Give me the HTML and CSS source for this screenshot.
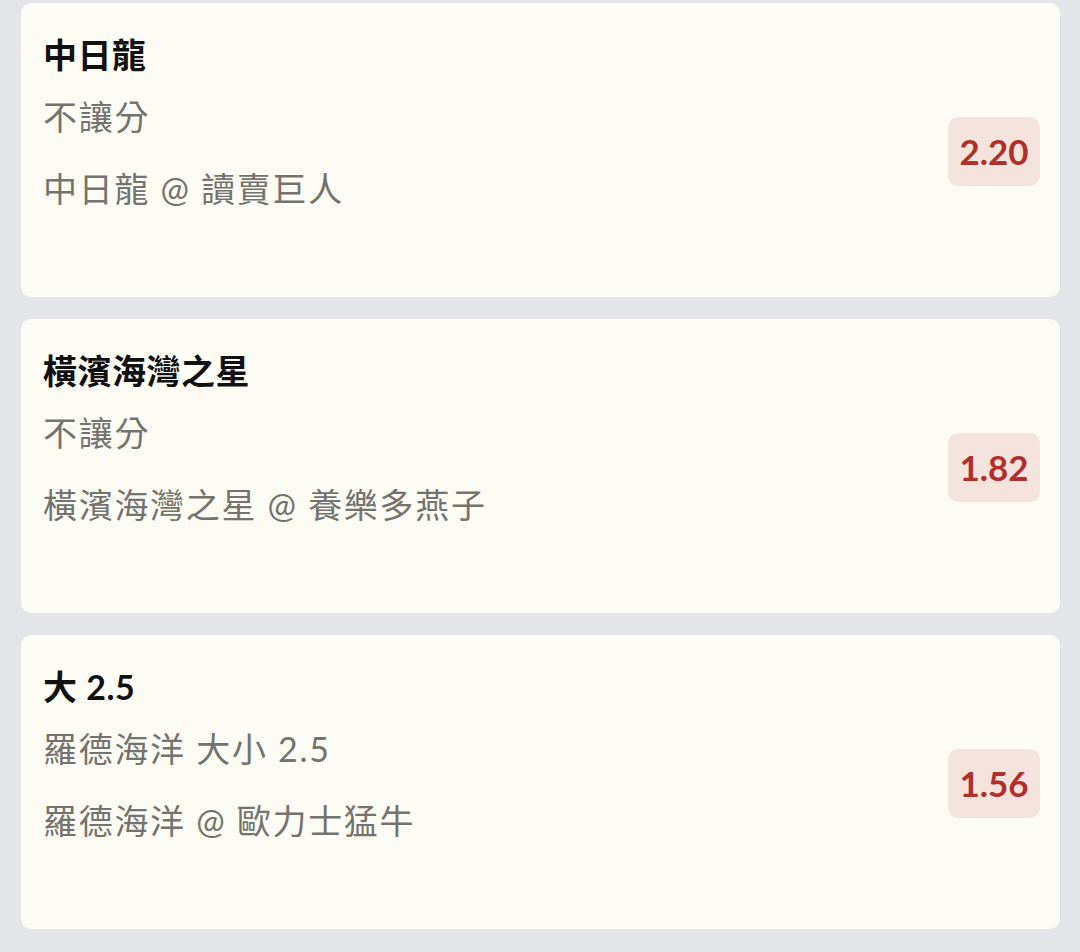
FILE: index.html
```html
<!DOCTYPE html>
<html lang="zh-Hant">
<head>
    <meta charset="UTF-8">
    <meta name="viewport" content="width=device-width, initial-scale=1.0">
    <title>投注選項</title>
    <link rel="stylesheet" href="styles.css">
</head>
<body>
    <div class="bet-list">
        <div class="bet-card">
            <div class="bet-info">
                <div class="bet-pick">中日龍</div>
                <div class="bet-market">不讓分</div>
                <div class="bet-match">中日龍 @ 讀賣巨人</div>
            </div>
            <div class="bet-odds">2.20</div>
        </div>

        <div class="bet-card">
            <div class="bet-info">
                <div class="bet-pick">橫濱海灣之星</div>
                <div class="bet-market">不讓分</div>
                <div class="bet-match">橫濱海灣之星 @ 養樂多燕子</div>
            </div>
            <div class="bet-odds">1.82</div>
        </div>

        <div class="bet-card">
            <div class="bet-info">
                <div class="bet-pick">大 2.5</div>
                <div class="bet-market">羅德海洋 大小 2.5</div>
                <div class="bet-match">羅德海洋 @ 歐力士猛牛</div>
            </div>
            <div class="bet-odds">1.56</div>
        </div>
    </div>
</body>
</html>
```

FILE: styles.css
```css
body {
    margin: 0;
    background-color: #e4e5e8;
    font-family: 'Lato', 'Noto Sans CJK TC', sans-serif;
}
.bet-list {
    display: flex;
    flex-direction: column;
    gap: 22px;
    padding: 3px 20px 0 21px;
}
.bet-card {
    display: flex;
    align-items: flex-start;
    height: 294px;
    box-sizing: border-box;
    padding: 32px 20px 0 22px;
    background-color: #fdfcf4;
    border-radius: 10px;
}
.bet-info {
    flex: 1;
}
.bet-pick {
    font-size: 34px;
    line-height: 40px;
    font-weight: 700;
    letter-spacing: 0.5px;
    color: #111;
    margin-bottom: 22px;
}
.bet-market,
.bet-match {
    font-size: 34px;
    line-height: 40px;
    letter-spacing: 1.7px;
    color: #74736e;
}
.bet-market {
    margin-bottom: 32px;
}
.bet-odds {
    align-self: center;
    margin-top: -30px;
    display: flex;
    align-items: center;
    justify-content: center;
    width: 92px;
    height: 69px;
    border-radius: 10px;
    background-color: #f5e4de;
    color: #b0302a;
    font-size: 35px;
    font-weight: 700;
}
```
